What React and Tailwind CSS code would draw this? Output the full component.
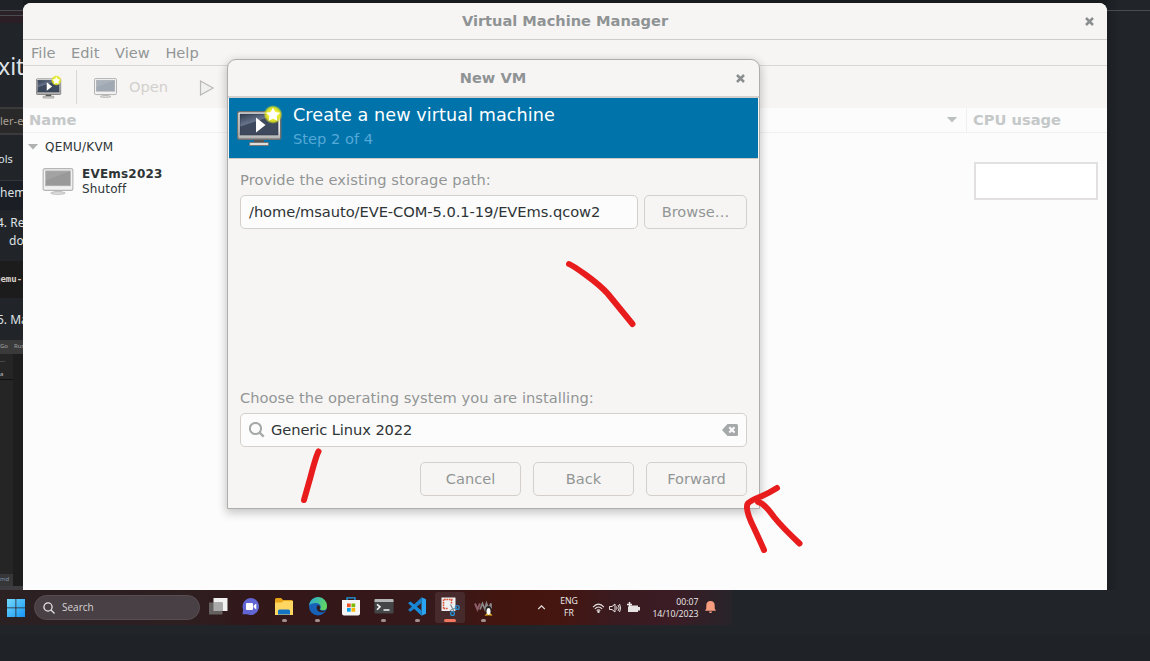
import React from "react";

function MonitorPlay({ className }) {
  return (
    <svg viewBox="0 0 46 42" className={className}>
      <defs>
        <linearGradient id="bezel" x1="0" y1="0" x2="0" y2="1">
          <stop offset="0" stopColor="#ffffff" />
          <stop offset="0.7" stopColor="#e2e2e2" />
          <stop offset="1" stopColor="#a9a9a9" />
        </linearGradient>
        <linearGradient id="screen" x1="0" y1="0" x2="0.6" y2="1">
          <stop offset="0" stopColor="#2f3b50" />
          <stop offset="0.42" stopColor="#66738a" />
          <stop offset="0.46" stopColor="#3e495d" />
          <stop offset="1" stopColor="#3e495d" />
        </linearGradient>
        <radialGradient id="glow">
          <stop offset="0.45" stopColor="#f4f43a" />
          <stop offset="0.75" stopColor="#dfe41c" stopOpacity="0.9" />
          <stop offset="1" stopColor="#d8e020" stopOpacity="0" />
        </radialGradient>
      </defs>
      <path d="M17 34h10v4H17z" fill="#555" />
      <rect x="12.500" y="37.500" width="19" height="3" rx="0.500" fill="#ddd" stroke="#777" />
      <rect x="0.700" y="6.700" width="43" height="27.500" rx="1.500" fill="url(#bezel)" stroke="#707070" strokeWidth="1.400" />
      <rect x="3" y="9" width="38" height="21" fill="url(#screen)" stroke="#2e3644" strokeWidth="0.600" />
      <path d="M19 12.500l9.500 7.500-9.500 7.500z" fill="#fff" />
      <circle cx="36" cy="9.500" r="9.500" fill="url(#glow)" />
      <path d="M36 2.500l2.200 4.600 5 .6-3.700 3.400 1 5-4.500-2.500-4.500 2.500 1-5-3.700-3.400 5-.6z" fill="#fff" />
    </svg>
  );
}

function Monitor({ className, screen, edge }) {
  return (
    <svg viewBox="0 0 32 28" className={className}>
      <path d="M12 23h8v3h-8z" fill="#cfcfcf" />
      <ellipse cx="16" cy="26" rx="7.500" ry="1.300" fill="#e4e4e4" stroke={edge} strokeWidth="0.900" />
      <rect x="0.600" y="0.600" width="30.800" height="22.600" rx="1.800" fill="#f1f1f1" stroke={edge} strokeWidth="1.200" />
      <rect x="3" y="3" width="26" height="15.500" fill={screen} stroke={edge} strokeWidth="0.600" />
      <path d="M3 3h26L3 13z" fill="#fff" opacity="0.1" />
    </svg>
  );
}

function CloseMark() {
  return (
    <svg viewBox="0 0 9 9" className="size-[9px]">
      <path d="M1 1l7 7M8 1L1 8" stroke="#8b8e8f" strokeWidth="2.500" />
    </svg>
  );
}

function BackgroundStrip() {
  return (
    <div className="flex h-[590px] w-[23px] shrink-0 flex-col overflow-hidden whitespace-nowrap bg-[#212529] font-['Noto_Sans'] text-[#dfe2e5]">
      <div className="h-[10px] shrink-0 bg-[#1f2226]" />
      <div className="h-[6px] shrink-0 border-y border-[#494b50] bg-[#2b2228]" />
      <div className="h-[7px] shrink-0 bg-[#2c1e25]" />
      <div className="h-[84px] shrink-0 pt-[26px] text-[23px] leading-[34px]">
        <span className="-ml-[2px]">xit</span>
      </div>
      <div className="h-[28px] shrink-0 border-y-2 border-[#3a3a3b] bg-[#292929] text-[11px] leading-[24px] text-[#a89f93]">ler-ev</div>
      <div className="h-[45px] shrink-0 pt-[15px] text-[11px] leading-[18px]">
        <span className="-ml-[2px]">ols</span>
      </div>
      <div className="h-[30px] shrink-0 border-t border-[#33373b] bg-[#1b1e24] text-[12px] leading-[24px]">hem</div>
      <div className="h-[51px] shrink-0 pt-[4px] text-[12px] leading-[18px]">
        <div className="-ml-[3px]">4. Re</div>
        <div className="pl-[9px]">do</div>
      </div>
      <div className="h-[37px] shrink-0 bg-[#1c1c1d] font-['DejaVu_Sans_Mono'] text-[9px] font-bold leading-[37px]">
        <span className="-ml-[5px] text-[#d8d2c9]">qemu-</span>
      </div>
      <div className="h-[42px] shrink-0 text-[12px] leading-[43px]">
        <span className="-ml-[3px]">5. Ma</span>
      </div>
      <div className="flex h-[14px] shrink-0 gap-[6px] bg-[#3a3a3b] text-[6px] leading-[13px] text-[#a0a0a0]">
        <span>Go</span>
        <span>Run</span>
      </div>
      <div className="flex h-[232px] shrink-0 bg-[#1e1e1e]">
        <div className="flex w-[13px] flex-col justify-between bg-[#252526] text-[6px] leading-[10px] text-[#c0c0c0]">
          <div className="h-[26px] border-b border-[#111]">
            <div className="leading-[14px]">···</div>
            <div className="leading-[12px]">a</div>
          </div>
          <div className="h-[12px] bg-[#37373a] text-[#7f93a8]">md</div>
        </div>
      </div>
      <div className="h-[4px] shrink-0 bg-[#3d3d3f]" />
    </div>
  );
}

function ManagerWindow() {
  return (
    <div className="mt-[3px] flex h-[587px] w-[1084px] shrink-0 flex-col overflow-hidden rounded-t-[8px] bg-[#fcfcfc]">
      <div className="flex h-[37px] shrink-0 items-center border-b border-[#cfcdca] bg-[#f6f5f4] pr-[13px]">
        <div className="grow pl-[22px] text-center text-[14.58px] font-bold text-[#8f9394]">Virtual Machine Manager</div>
        <CloseMark />
      </div>
      <div className="flex h-[26px] shrink-0 items-center gap-[15.700px] border-b border-[#d9d7d5] bg-[#f6f5f4] pl-[8px] text-[14.600px] text-[#929595]">
        <span>File</span>
        <span>Edit</span>
        <span>View</span>
        <span>Help</span>
      </div>
      <div className="flex h-[42px] shrink-0 items-center bg-[#f6f5f4] pl-[13px] text-[14.67px] text-[#d3d0cc]">
        <MonitorPlay className="h-[24px] w-[26px]" />
        <div className="ml-[14px] h-[34px] w-px bg-[#d9d7d5]" />
        <Monitor className="ml-[17px] mt-px h-[20px] w-[23px]" screen="#a0a9b3" edge="#a8a8a8" />
        <span className="ml-[12px]">Open</span>
        <svg viewBox="0 0 16 16" className="ml-[31px] mt-px size-[16px]">
          <path d="M1.500 1l12.500 7L1.500 15z" fill="#f0f0ef" stroke="#b9b9b8" strokeWidth="1.200" />
        </svg>
      </div>
      <div className="flex h-[25px] shrink-0 items-center border-b border-[#f1f0ef] text-[14.67px] font-bold text-[#c5c8c8]">
        <span className="grow pl-[6px]">Name</span>
        <svg viewBox="0 0 12 7" className="mr-[8px] h-[6px] w-[12px]">
          <path d="M0 0h12L6 6.500z" fill="#bdc0c0" />
        </svg>
        <div className="flex h-full w-[141px] items-center border-l border-[#f1f0ef] pl-[6px]">CPU usage</div>
      </div>
      <div className="flex h-[27px] shrink-0 items-center pl-[4px] text-[12px] text-[#2e3436]">
        <svg viewBox="0 0 12 7" className="h-[6px] w-[12px]">
          <path d="M0 0h12L6 6.500z" fill="#b0b1b1" />
        </svg>
        <span className="ml-[6px] tracking-[0.22px]">QEMU/KVM</span>
      </div>
      <div className="flex h-[44px] shrink-0 items-center pl-[19px] pr-[9px]">
        <Monitor className="mb-px h-[27px] w-[32px]" screen="#999999" edge="#b5b5b5" />
        <div className="ml-[8px] grow text-[12px] leading-[15px] text-[#2e3436]">
          <div className="font-bold tracking-[0.2px]">EVEms2023</div>
          <div className="tracking-[0.150px]">Shutoff</div>
        </div>
        <div className="mb-[2px] h-[38px] w-[124px] border-2 border-[#e2e0e0] bg-white" />
      </div>
    </div>
  );
}

function DialogButton({ children, className = "w-[101px]" }) {
  return (
    <button className={"h-[34px] rounded-[5px] border border-[#d4cfca] bg-[#f6f5f4] text-[14.600px] text-[#929595] " + className}>
      {children}
    </button>
  );
}

function NewVmDialog() {
  return (
    <div className="absolute left-[227px] top-[59px] flex h-[450px] w-[533px] flex-col rounded-t-[9px] border border-[#adadac] bg-[#f6f5f4] text-[14.67px] text-[#929595] shadow-[0_3px_10px_1px_rgba(0,0,0,0.22)]">
      <div className="flex h-[38px] shrink-0 items-center border-b-2 border-[#d3d0cd] pr-[14px]">
        <div className="grow pl-[22px] text-center text-[14.58px] font-bold text-[#8f9394]">New VM</div>
        <CloseMark />
      </div>
      <div className="mx-px flex h-[61px] shrink-0 border-b border-[#cfc9c4] bg-[#0073aa] pl-[8px]">
        <MonitorPlay className="mt-[7px] h-[42px] w-[46px]" />
        <div className="ml-[10px] pt-[5px]">
          <div className="text-[17.600px] leading-[24px] tracking-[0.070px] text-white">Create a new virtual machine</div>
          <div className="leading-[24px] text-[#55a9d8]">Step 2 of 4</div>
        </div>
      </div>
      <div className="flex grow flex-col px-[12px] pt-[11px]">
        <div className="h-[25px] leading-[20px] tracking-[0.070px]">Provide the existing storage path:</div>
        <div className="flex gap-[6px]">
          <div className="flex h-[34px] w-[398px] items-center rounded-[5px] border border-[#d4cfca] bg-[#fcfcfc] pl-[8px] tracking-[-0.060px] text-[#2e3436]">/home/msauto/EVE-COM-5.0.1-19/EVEms.qcow2</div>
          <DialogButton className="w-[103px]">Browse…</DialogButton>
        </div>
        <div className="mt-[159px] h-[25px] leading-[20px] tracking-[0.040px]">Choose the operating system you are installing:</div>
        <div className="flex h-[34px] items-center rounded-[5px] border border-[#d4cfca] bg-[#fcfcfc] px-[8px] text-[#2e3436]">
          <svg viewBox="0 0 16 16" className="size-[16px]" fill="none" stroke="#a5a9a9" strokeWidth="2">
            <circle cx="6.500" cy="6.500" r="5.600" />
            <path d="M10.500 10.500l4.200 4.200" strokeWidth="2.400" />
          </svg>
          <span className="ml-[6px] grow tracking-[-0.090px]">Generic Linux 2022</span>
          <svg viewBox="0 0 16 12" className="h-[12px] w-[16px]">
            <path d="M5.500 0H14.500Q16 0 16 1.500V10.500Q16 12 14.500 12H5.500L0 6z" fill="#a5a9a9" />
            <path d="M7.300 3.300l5.200 5.200M12.500 3.300L7.300 8.500" stroke="#fcfcfc" strokeWidth="2" />
          </svg>
        </div>
        <div className="mt-[15px] flex justify-end gap-[12px]">
          <DialogButton>Cancel</DialogButton>
          <DialogButton>Back</DialogButton>
          <DialogButton>Forward</DialogButton>
        </div>
      </div>
    </div>
  );
}

function TaskItem({ children, running, active }) {
  return (
    <div className={"flex h-[31px] w-[30px] shrink-0 flex-col items-center rounded-[3px] pt-[5px] " + (active ? "bg-[#472b2c]" : "")}>
      {children}
      {running && <div className="mt-[2px] h-[3px] w-[5px] shrink-0 rounded-full bg-[#a08f8e]" />}
      {active && <div className="mt-[2px] h-[3px] w-[12px] shrink-0 rounded-full bg-[#f0775d]" />}
    </div>
  );
}

const glyph = "size-[20px] shrink-0";

function Taskbar() {
  return (
    <div className="flex h-[35px] w-[732px] items-center overflow-hidden bg-[linear-gradient(90deg,#2b2022_0%,#2e1f21_25%,#321719_35%,#351719_50%,#35191b_60%,#43150f_68%,#45150f_76%,#3a1b20_84%,#3b1c25_92%,#28242a_100%)] pl-[7px]">
      <svg viewBox="0 0 18 18" className="size-[18px] shrink-0">
        <defs>
          <linearGradient id="win" x1="0" y1="0" x2="1" y2="1">
            <stop offset="0" stopColor="#75d9ff" />
            <stop offset="1" stopColor="#1495f2" />
          </linearGradient>
        </defs>
        <path d="M0 0h8.500v8.500H0zM9.300 0H18v8.500H9.300zM0 9.300h8.500V18H0zM9.300 9.300H18V18H9.300z" fill="url(#win)" />
      </svg>
      <div className="ml-[9px] flex h-[25px] w-[166px] shrink-0 items-center rounded-full border border-[#584e51] bg-[#484044] pl-[8px]">
        <svg viewBox="0 0 12 12" className="size-[12px]" fill="none" stroke="#e6e3e3" strokeWidth="1.300">
          <circle cx="5" cy="5" r="4.100" />
          <path d="M8 8l3.500 3.500" />
        </svg>
        <span className="ml-[7px] font-['Open_Sans'] text-[10px] text-[#d8d3d4]">Search</span>
      </div>
      <div className="ml-[3px] flex gap-[3.200px]">
        <TaskItem>
          <svg viewBox="0 0 20 20" className={glyph}>
            <path d="M5.500 1h14v13h-14z" fill="#f1f1f1" />
            <path d="M1 5.500h13.500v12H1z" fill="#6c6968" opacity="0.9" />
            <path d="M5.500 5.500h9V14h-9z" fill="#a9a9a9" />
          </svg>
        </TaskItem>
        <TaskItem>
          <svg viewBox="0 0 20 20" className={glyph}>
            <path d="M10 1a8.500 8.500 0 1 1-4 16.200H1.500l.6-4.700A8.500 8.500 0 0 1 10 1z" fill="#6166d2" />
            <rect x="5" y="6" width="7" height="7" rx="1" fill="#fff" />
            <path d="M12.700 8.500l2.600-2v6l-2.600-2z" fill="#fff" />
          </svg>
        </TaskItem>
        <TaskItem running>
          <svg viewBox="0 0 20 20" className={glyph}>
            <path d="M1 2.500q0-1.500 1.500-1.500H7l2 2h8.500q1.500 0 1.500 1.500V17H1z" fill="#e8a317" />
            <path d="M1 5.500h6.500L9.500 4H19v14H1z" fill="#ffd661" />
            <path d="M4 17.500V14q0-1.500 1.500-1.500h9q1.500 0 1.500 1.500v3.500z" fill="#1473c2" />
          </svg>
        </TaskItem>
        <TaskItem running>
          <svg viewBox="0 0 20 20" className={glyph}>
            <defs>
              <linearGradient id="edge" x1="0" y1="0" x2="1" y2="0.400">
                <stop offset="0" stopColor="#24a9df" />
                <stop offset="1" stopColor="#61d463" />
              </linearGradient>
            </defs>
            <circle cx="10" cy="9.500" r="9" fill="#1762b8" />
            <path d="M1 8.500A9 9 0 0 1 19 9.500c0 4-4.500 4.500-7 3 2-3 0-6.500-4-6.500-3 0-6 1-7 2.500z" fill="url(#edge)" />
            <path d="M10 8q2.200.7 2.200 2.600c0 1-.8 1.700-.2 2.300 1 1 4.500 1.200 6.300 0-2 2.500-4.500 2.800-6.500 2.100C8.500 13.800 7.500 10 10 8z" fill="#2d2025" />
          </svg>
        </TaskItem>
        <TaskItem>
          <svg viewBox="0 0 20 20" className={glyph}>
            <path d="M6 4V.8h8V4" fill="none" stroke="#1d9ee5" strokeWidth="1.300" />
            <path d="M1 3h18v13.500q0 2-2 2H3q-2 0-2-2z" fill="#f5f5f5" />
            <path d="M6 6.500h3.700v3.700H6z" fill="#f05025" />
            <path d="M10.500 6.500h3.700v3.700h-3.700z" fill="#7db902" />
            <path d="M6 11h3.700v3.700H6z" fill="#02a3ee" />
            <path d="M10.500 11h3.700v3.700h-3.700z" fill="#feb700" />
          </svg>
        </TaskItem>
        <TaskItem running>
          <svg viewBox="0 0 20 20" className={glyph}>
            <rect x="0.500" y="2" width="19" height="14.500" rx="1" fill="#444648" />
            <path d="M.5 3q0-1 1-1h17q1 0 1 1v2H.5z" fill="#b5b6b7" />
            <path d="M3 7.300l3 2.500-3 3M9.500 13h6" fill="none" stroke="#f4f4f4" strokeWidth="1.600" />
          </svg>
        </TaskItem>
        <TaskItem running>
          <svg viewBox="0 0 20 20" className={glyph}>
            <path d="M14.500.3L19 2.300v14.500l-4.500 2z" fill="#29a2ef" />
            <path d="M14.500.5V6L3.500 14.700 1 13z" fill="#1b80cc" />
            <path d="M14.500 18.700V13.500L3.500 4.500 1 6z" fill="#168bdb" />
          </svg>
        </TaskItem>
        <TaskItem active>
          <svg viewBox="0 0 20 20" className={glyph}>
            <path d="M1.500.5h14V14h-14z" fill="#eef0f1" />
            <path d="M3.500 11.500v-9h9" fill="none" stroke="#dc5136" strokeWidth="1.500" strokeDasharray="1.700 0.700" />
            <path d="M11.500 2.500V7M3.500 11.500H8" stroke="#dc5136" strokeWidth="1.500" strokeDasharray="1.700 0.700" />
            <path d="M10.500 7.500l3.500 7M17 10.500l-7 3" stroke="#7f8990" strokeWidth="1.200" />
            <circle cx="17.300" cy="10.500" r="1.900" fill="none" stroke="#2492d5" strokeWidth="1.300" />
            <circle cx="12.500" cy="16.500" r="1.900" fill="none" stroke="#2492d5" strokeWidth="1.300" />
          </svg>
        </TaskItem>
        <TaskItem running>
          <svg viewBox="0 0 20 20" className={glyph}>
            <path d="M1 6.500l2.500 6L6 6.500" fill="none" stroke="#8b5b68" strokeWidth="2" />
            <path d="M6 12.500l2.500-6 2.500 6 1.500-6 2 5 2.500-5v5" fill="none" stroke="#8a8587" strokeWidth="1.800" />
            <ellipse cx="14.500" cy="13.500" rx="3" ry="4.500" fill="#222" />
            <ellipse cx="14.500" cy="14.500" rx="2" ry="3.500" fill="#fff" />
            <path d="M10.500 18.500l2.500-2.300 1.500 2.300zM14.500 18.500l2-2.300 2 2.300z" fill="#f1bd25" />
          </svg>
        </TaskItem>
      </div>
      <svg viewBox="0 0 10 6" className="ml-[38px] h-[5px] w-[9px] shrink-0" fill="none" stroke="#e8e3e3" strokeWidth="1.500">
        <path d="M1 5l4-4 4 4" />
      </svg>
      <div className="ml-[13px] w-[21px] shrink-0 text-center font-['Open_Sans'] text-[8.700px] leading-[11.500px] text-[#f1eded]">
        <div>ENG</div>
        <div>FR</div>
      </div>
      <svg viewBox="0 0 14 11" className="ml-[12px] h-[10px] w-[13px] shrink-0" fill="none" stroke="#e8e3e3" strokeWidth="1.200">
        <path d="M1 4.500q6-6.500 12 0M3 6.500q4-4.200 8 0M5 8.500q2-2.200 4 0" />
        <circle cx="7" cy="9.600" r="0.700" fill="#e8e3e3" />
      </svg>
      <svg viewBox="0 0 12 10" className="ml-[4px] h-[10px] w-[12px] shrink-0" fill="none" stroke="#e8e3e3" strokeWidth="1">
        <path d="M.5 3.500H3L6 1v8L3 6.500H.5zM7.500 3.500q1.200 1.500 0 3M9 2q2.500 3 0 6M10.500 1q2.500 4 0 8" />
      </svg>
      <svg viewBox="0 0 13 11" className="ml-[6px] h-[11px] w-[13px] shrink-0">
        <path d="M3 3.500h8V5h2v3.500h-2V10H1V5z" fill="#e8e3e3" />
        <path d="M2.500 0v5M0 2.500h5" stroke="#f2eeee" strokeWidth="1.500" />
      </svg>
      <div className="ml-[9px] w-[50px] shrink-0 whitespace-nowrap text-right font-['Open_Sans'] text-[8.700px] leading-[12px] text-[#f1eded]">
        <div>00:07</div>
        <div>14/10/2023</div>
      </div>
      <svg viewBox="0 0 11 13" className="ml-[6px] h-[13px] w-[11px] shrink-0" fill="#f79d7f">
        <path d="M5.500 0q4.200 0 4.200 4.500v3l1.300 2.200H0l1.300-2.200v-3Q1.300 0 5.500 0zM4 10.500h3q0 1.500-1.500 1.500T4 10.500z" />
      </svg>
    </div>
  );
}

function Annotations() {
  return (
    <svg viewBox="0 0 1150 661" className="pointer-events-none absolute inset-0 h-[661px] w-[1150px]" fill="none" stroke="#e81c1c" strokeWidth="6" strokeLinecap="round" strokeLinejoin="round">
      <path d="M569 264Q572 265 586 275Q601 286 608 294L632.500 324" />
      <path d="M318.500 451.500Q316 456 310.500 477L304 500" />
      <path d="M777 488Q769 493 762 496Q749 501 747.500 504Q745 510 754 528Q761 543 764 550" />
      <path d="M758 502Q764 503 774 517Q782 527 799.500 543.500" />
    </svg>
  );
}

export default function App() {
  return (
    <div className="relative flex h-[661px] w-[1150px] flex-col overflow-hidden bg-[#212529] font-['DejaVu_Sans']">
      <div className="flex h-[590px] shrink-0">
        <div className="flex w-[1107px] shrink-0 bg-[#191c1f]">
          <BackgroundStrip />
          <ManagerWindow />
        </div>
        <div className="grow bg-[linear-gradient(90deg,#1b1e22,#212429_12px)] pt-[10px]">
          <div className="h-px bg-[#494c50]" />
        </div>
      </div>
      <Taskbar />
      <div className="mt-[10px] grow bg-[#1f2227]" />
      <NewVmDialog />
      <Annotations />
    </div>
  );
}
